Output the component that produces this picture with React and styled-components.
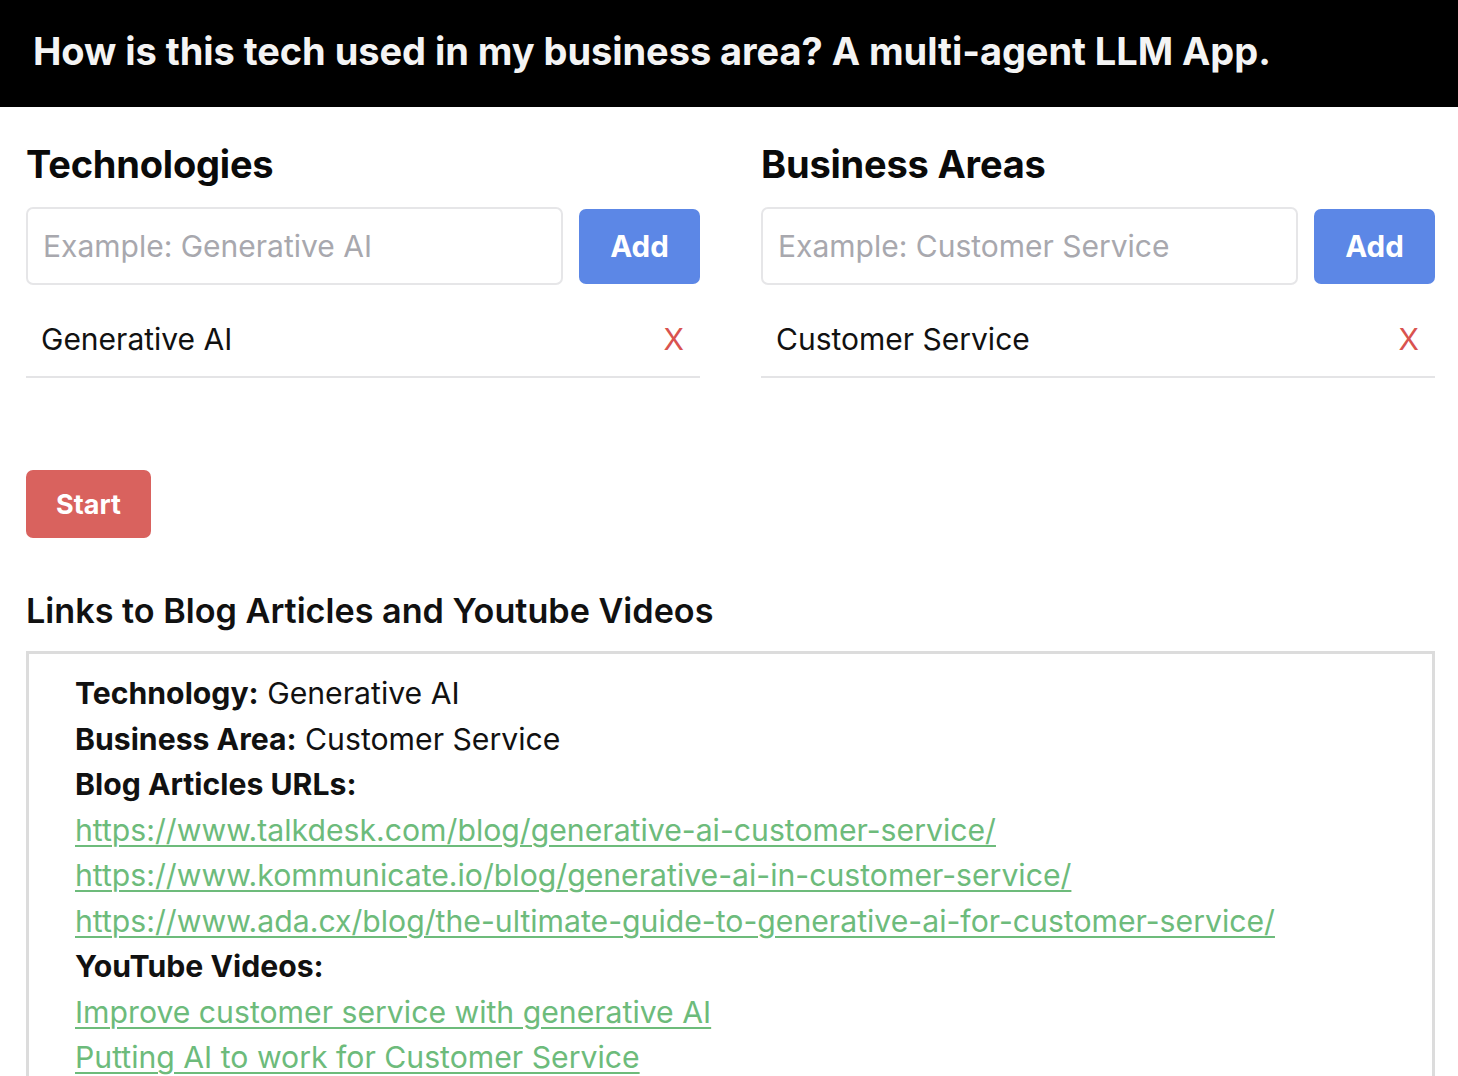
import React from "react";
import styled, { createGlobalStyle } from "styled-components";

const Global = createGlobalStyle`
  html, body { margin: 0; padding: 0; background: #fff; }
  body { font-family: Inter, "Liberation Sans", sans-serif; color: #111; overflow: hidden; }
  * { box-sizing: border-box; }
`;

const Header = styled.header`
  height: 107px;
  background: #000;
  display: flex;
  align-items: center;
  padding: 0 0 6px 33px;
`;

const Title = styled.h1`
  margin: 0;
  color: #f4f4f4;
  font-size: 38px;
  font-weight: 700;
  letter-spacing: -0.05px;
`;

const Main = styled.main`
  padding: 0 23px 0 26px;
`;

const Columns = styled.div`
  display: grid;
  grid-template-columns: 1fr 1fr;
  column-gap: 61px;
  padding-top: 36px;
`;

const Column = styled.section`
  display: flex;
  flex-direction: column;
`;

const ColumnTitle = styled.h2`
  margin: 0 0 22px;
  font-size: 38px;
  font-weight: 700;
  line-height: 42px;
  letter-spacing: -0.2px;
  color: #0a0a0a;
`;

const InputRow = styled.div`
  display: flex;
  align-items: center;
  gap: 16px;
`;

const TextInput = styled.input`
  flex: 1;
  min-width: 0;
  height: 78px;
  border: 2px solid #e6e6e8;
  border-radius: 7px;
  padding: 0 15px;
  font-family: inherit;
  font-size: 30px;
  color: #222;
  outline: none;
  &::placeholder { color: #a8a8ae; }
`;

const AddButton = styled.button`
  width: 121px;
  height: 75px;
  border: none;
  border-radius: 7px;
  background: #5c87e6;
  color: #fff;
  font-family: inherit;
  font-size: 29.5px;
  font-weight: 700;
`;

const ListItem = styled.div`
  margin-top: 16px;
  height: 77px;
  display: flex;
  align-items: center;
  justify-content: space-between;
  padding: 0 16px 0 15px;
  border-bottom: 2px solid #e4e4e6;
  font-size: 30px;
  color: #111;
`;

const Remove = styled.span`
  color: #d9534f;
  font-size: 30px;
`;

const StartButton = styled.button`
  margin-top: 92px;
  width: 125px;
  height: 68px;
  border: none;
  border-radius: 7px;
  background: #d9625e;
  color: #fff;
  font-family: inherit;
  font-size: 27px;
  font-weight: 700;
`;

const SectionTitle = styled.h3`
  margin: 53px 0 20px;
  font-size: 34.2px;
  font-weight: 600;
  line-height: 40px;
  color: #111;
`;

const ResultBox = styled.div`
  border: 3px solid #dcdcdc;
  border-bottom: none;
  padding: 17px 46px 0 46px;
  height: 430px;
  font-size: 30.2px;
  line-height: 45.5px;
`;

const Line = styled.div`
  white-space: nowrap;
`;

const Label = styled.strong`
  font-weight: 700;
`;

const Link = styled.a`
  color: #6dbb7b;
  text-decoration: underline;
  text-decoration-thickness: 2px;
  text-underline-offset: 4px;
`;

const items = [
  { title: "Technologies", placeholder: "Example: Generative AI", value: "Generative AI" },
  { title: "Business Areas", placeholder: "Example: Customer Service", value: "Customer Service" },
];

const blogs = [
  "https://www.talkdesk.com/blog/generative-ai-customer-service/",
  "https://www.kommunicate.io/blog/generative-ai-in-customer-service/",
  "https://www.ada.cx/blog/the-ultimate-guide-to-generative-ai-for-customer-service/",
];

const videos = [
  "Improve customer service with generative AI",
  "Putting AI to work for Customer Service",
];

export default function App() {
  return (
    <>
      <Global />
      <Header>
        <Title>How is this tech used in my business area? A multi-agent LLM App.</Title>
      </Header>
      <Main>
        <Columns>
          {items.map((it) => (
            <Column key={it.title}>
              <ColumnTitle>{it.title}</ColumnTitle>
              <InputRow>
                <TextInput placeholder={it.placeholder} />
                <AddButton>Add</AddButton>
              </InputRow>
              <ListItem>
                <span>{it.value}</span>
                <Remove>X</Remove>
              </ListItem>
            </Column>
          ))}
        </Columns>
        <StartButton>Start</StartButton>
        <SectionTitle>Links to Blog Articles and Youtube Videos</SectionTitle>
        <ResultBox>
          <Line><Label>Technology:</Label> Generative AI</Line>
          <Line><Label>Business Area:</Label> Customer Service</Line>
          <Line><Label>Blog Articles URLs:</Label></Line>
          {blogs.map((u) => (
            <Line key={u}><Link href="#">{u}</Link></Line>
          ))}
          <Line><Label>YouTube Videos:</Label></Line>
          {videos.map((v) => (
            <Line key={v}><Link href="#">{v}</Link></Line>
          ))}
        </ResultBox>
      </Main>
    </>
  );
}
